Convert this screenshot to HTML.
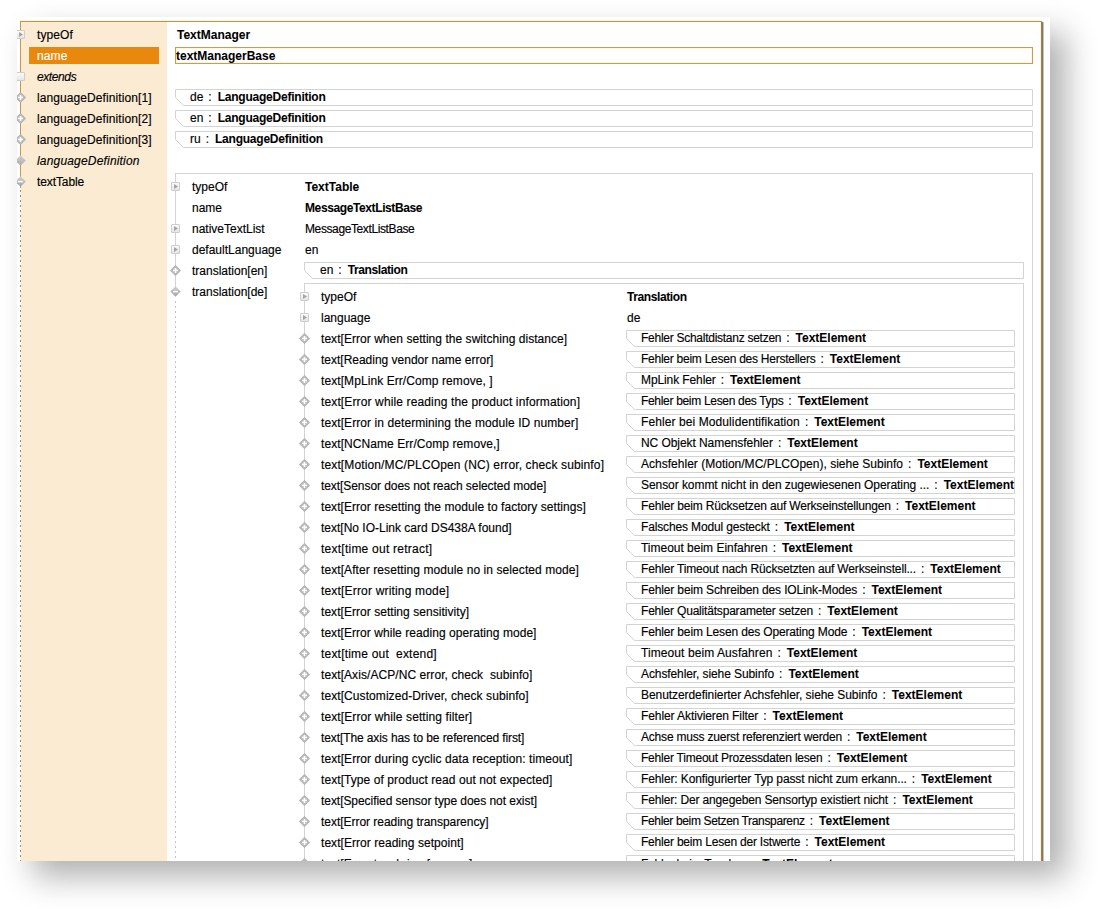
<!DOCTYPE html>
<html><head><meta charset="utf-8"><style>
html,body{margin:0;padding:0;}
body{width:1098px;height:909px;overflow:hidden;background:#fff;position:relative;font-family:"Liberation Sans",sans-serif;font-size:12px;color:#000;}
.shot{position:absolute;left:17px;top:17px;width:1033px;height:844px;background:#fff;box-shadow:16px 16px 30px rgba(0,0,0,0.31);}
.clip{position:absolute;left:0;top:0;width:1098px;height:909px;clip-path:inset(17px 48px 48px 17px);}
.side{position:absolute;left:21px;top:22px;width:146px;height:839px;background:#fcebd3;}
.frame{position:absolute;left:20px;top:21px;width:1021px;height:900px;border-top:1px solid #c4914c;border-right:1px solid #a5804f;}
.frame:before{content:"";position:absolute;left:0;right:0;top:-2px;height:1px;background:#fff7d6;}
.lline{position:absolute;left:20px;top:21px;width:1px;height:167px;background:#c9964c;}
.ldash{position:absolute;left:20px;top:187px;width:1px;height:680px;background:repeating-linear-gradient(to bottom,transparent 0,transparent 3px,#b8864a 3px,#b8864a 5px);}
.rsh{position:absolute;left:1042px;top:22px;width:2px;height:900px;background:linear-gradient(to right,#777 0,#777 50%,#c4c4c4 50%,#c4c4c4 100%);}
.ryl{position:absolute;left:1040px;top:22px;width:1px;height:900px;background:#fff6c8;}
.t{position:absolute;height:17px;line-height:17px;white-space:pre;-webkit-text-stroke:0.15px #000;}
.w{-webkit-text-stroke:0.15px #fff;}
.t b{font-weight:bold;-webkit-text-stroke:0.05px #000;}
.b{font-weight:bold;-webkit-text-stroke:0.05px #000;}
.i{font-style:italic;}
.w{color:#fff;}
.sep{display:inline-block;padding:0 6px 0 5px;}
.sel{position:absolute;width:130px;height:17px;background:#e8890e;}
.inp{position:absolute;left:175px;top:47px;width:856px;height:15px;border:1px solid #cc9a50;background:#fff;box-shadow:inset 0 0 0 1px #fff8dc;}
.tbl{position:absolute;border-top:1px solid #d3d3d3;border-right:1px solid #d3d3d3;}
.vl{position:absolute;width:1px;background:#d3d3d3;}
.vd{position:absolute;width:1px;background:repeating-linear-gradient(to bottom,transparent 0,transparent 3px,#c4c4c4 3px,#c4c4c4 5px);}
.btn{position:absolute;width:7px;height:7px;border:1px solid #cdcdcd;border-radius:1px;background:linear-gradient(#fafafa,#e6e6e6);}
.btn svg{position:absolute;left:-1px;top:-1px;}
.ic{position:absolute;}
</style></head><body>
<div class="shot"></div>
<div class="clip">
<div class="side"></div>
<div class="frame"></div>
<div class="ryl"></div>
<div class="rsh"></div>
<div class="lline"></div>
<div class="ldash"></div>
<div class="t " style="left:37px;top:27px;letter-spacing:0.1px">typeOf</div>
<div class="btn" style="left:16px;top:30px"><svg width="9" height="9"><path d="M3 2 L7 4.5 L3 7 Z" fill="#a4a4a4"/></svg></div>
<div class="sel" style="left:29px;top:47px"></div>
<div class="t w" style="left:37px;top:48px;letter-spacing:0.1px">name</div>
<div class="t i" style="left:37px;top:69px;letter-spacing:-0.4px">extends</div>
<div class="btn" style="left:16px;top:72px"></div>
<div class="t " style="left:37px;top:90px;letter-spacing:0.09px">languageDefinition[1]</div>
<svg class="ic" style="left:15px;top:92px" width="11" height="11"><path d="M5.5 0.3 L10.7 5.5 L5.5 10.7 L0.3 5.5 Z" fill="#b9b9b9" stroke="#adadad" stroke-width="0.8"/><rect x="3" y="4.6" width="5" height="1.6" fill="#fff"/><rect x="4.7" y="3" width="1.6" height="5" fill="#fff"/></svg>
<div class="t " style="left:37px;top:111px;letter-spacing:0.09px">languageDefinition[2]</div>
<svg class="ic" style="left:15px;top:113px" width="11" height="11"><path d="M5.5 0.3 L10.7 5.5 L5.5 10.7 L0.3 5.5 Z" fill="#b9b9b9" stroke="#adadad" stroke-width="0.8"/><rect x="3" y="4.6" width="5" height="1.6" fill="#fff"/><rect x="4.7" y="3" width="1.6" height="5" fill="#fff"/></svg>
<div class="t " style="left:37px;top:132px;letter-spacing:0.09px">languageDefinition[3]</div>
<svg class="ic" style="left:15px;top:134px" width="11" height="11"><path d="M5.5 0.3 L10.7 5.5 L5.5 10.7 L0.3 5.5 Z" fill="#b9b9b9" stroke="#adadad" stroke-width="0.8"/><rect x="3" y="4.6" width="5" height="1.6" fill="#fff"/><rect x="4.7" y="3" width="1.6" height="5" fill="#fff"/></svg>
<div class="t i" style="left:37px;top:153px;letter-spacing:0.18px">languageDefinition</div>
<svg class="ic" style="left:15px;top:155px" width="11" height="11"><defs><linearGradient id="g15155" x1="0" y1="0" x2="0" y2="1"><stop offset="0" stop-color="#d0d0d0"/><stop offset="1" stop-color="#adadad"/></linearGradient></defs><path d="M5.5 0.3 L10.7 5.5 L5.5 10.7 L0.3 5.5 Z" fill="url(#g15155)"/></svg>
<div class="t " style="left:37px;top:174px;letter-spacing:-0.1px">textTable</div>
<svg class="ic" style="left:15px;top:176px" width="11" height="11"><defs><linearGradient id="g15176" x1="0" y1="0" x2="0" y2="1"><stop offset="0" stop-color="#d2d2d2"/><stop offset="1" stop-color="#a2a2a2"/></linearGradient></defs><path d="M5.5 0.3 L10.7 5.5 L5.5 10.7 L0.3 5.5 Z" fill="url(#g15176)"/><rect x="3" y="4.8" width="5" height="1.6" fill="#fff"/></svg>
<div class="t b" style="left:177px;top:27px">TextManager</div>
<div class="inp"></div>
<div class="t b" style="left:176px;top:48px">textManagerBase</div>
<svg class="ic" style="left:175px;top:89px" width="858" height="17"><path d="M0.5 0.5 H857.5 V16.5 H8.5 L0.5 8.5 Z" fill="#fff" stroke="#d3d3d3" stroke-width="1"/></svg>
<div class="t" style="left:190px;top:89px">de<span class="sep">:</span><b style="letter-spacing:-0.23px">LanguageDefinition</b></div>
<svg class="ic" style="left:175px;top:110px" width="858" height="17"><path d="M0.5 0.5 H857.5 V16.5 H8.5 L0.5 8.5 Z" fill="#fff" stroke="#d3d3d3" stroke-width="1"/></svg>
<div class="t" style="left:190px;top:110px">en<span class="sep">:</span><b style="letter-spacing:-0.23px">LanguageDefinition</b></div>
<svg class="ic" style="left:175px;top:131px" width="858" height="17"><path d="M0.5 0.5 H857.5 V16.5 H8.5 L0.5 8.5 Z" fill="#fff" stroke="#d3d3d3" stroke-width="1"/></svg>
<div class="t" style="left:190px;top:131px">ru<span class="sep">:</span><b style="letter-spacing:-0.23px">LanguageDefinition</b></div>
<div class="tbl" style="left:175px;top:173px;width:857px;height:700px"></div>
<div class="vl" style="left:175px;top:173px;height:120px"></div>
<div class="vd" style="left:175px;top:298px;height:570px"></div>
<div class="t " style="left:192px;top:179px">typeOf</div>
<div class="t " style="left:305px;top:179px"><b>TextTable</b></div>
<div class="t " style="left:192px;top:200px">name</div>
<div class="t " style="left:305px;top:200px"><b style="letter-spacing:-0.39px">MessageTextListBase</b></div>
<div class="t " style="left:192px;top:221px">nativeTextList</div>
<div class="t " style="left:305px;top:221px"><span style="letter-spacing:-0.39px">MessageTextListBase</span></div>
<div class="t " style="left:192px;top:242px">defaultLanguage</div>
<div class="t " style="left:305px;top:242px">en</div>
<div class="t " style="left:192px;top:263px">translation[en]</div>
<div class="t " style="left:192px;top:284px">translation[de]</div>
<div class="btn" style="left:171px;top:182px"><svg width="9" height="9"><path d="M3 2 L7 4.5 L3 7 Z" fill="#a4a4a4"/></svg></div>
<div class="btn" style="left:171px;top:224px"><svg width="9" height="9"><path d="M3 2 L7 4.5 L3 7 Z" fill="#a4a4a4"/></svg></div>
<div class="btn" style="left:171px;top:245px"><svg width="9" height="9"><path d="M3 2 L7 4.5 L3 7 Z" fill="#a4a4a4"/></svg></div>
<svg class="ic" style="left:170px;top:265px" width="11" height="11"><path d="M5.5 0.3 L10.7 5.5 L5.5 10.7 L0.3 5.5 Z" fill="#b9b9b9" stroke="#adadad" stroke-width="0.8"/><rect x="3" y="4.6" width="5" height="1.6" fill="#fff"/><rect x="4.7" y="3" width="1.6" height="5" fill="#fff"/></svg>
<svg class="ic" style="left:170px;top:286px" width="11" height="11"><defs><linearGradient id="g170286" x1="0" y1="0" x2="0" y2="1"><stop offset="0" stop-color="#d2d2d2"/><stop offset="1" stop-color="#a2a2a2"/></linearGradient></defs><path d="M5.5 0.3 L10.7 5.5 L5.5 10.7 L0.3 5.5 Z" fill="url(#g170286)"/><rect x="3" y="4.8" width="5" height="1.6" fill="#fff"/></svg>
<svg class="ic" style="left:304px;top:262px" width="720" height="17"><path d="M0.5 0.5 H719.5 V16.5 H8.5 L0.5 8.5 Z" fill="#fff" stroke="#d3d3d3" stroke-width="1"/></svg>
<div class="t" style="left:320px;top:262px">en<span class="sep">:</span><b style="letter-spacing:-0.4px">Translation</b></div>
<div class="tbl" style="left:304px;top:283px;width:719px;height:700px"></div>
<div class="vl" style="left:304px;top:283px;height:600px"></div>
<div class="t " style="left:321px;top:289px">typeOf</div>
<div class="t " style="left:627px;top:289px"><b style="letter-spacing:-0.4px">Translation</b></div>
<div class="t " style="left:321px;top:310px">language</div>
<div class="t " style="left:627px;top:310px">de</div>
<div class="btn" style="left:300px;top:292px"><svg width="9" height="9"><path d="M3 2 L7 4.5 L3 7 Z" fill="#a4a4a4"/></svg></div>
<div class="btn" style="left:300px;top:313px"><svg width="9" height="9"><path d="M3 2 L7 4.5 L3 7 Z" fill="#a4a4a4"/></svg></div>
<div class="t" style="left:321px;top:331px;letter-spacing:0.043px">text[Error when setting the switching distance]</div>
<svg class="ic" style="left:626px;top:330px" width="389" height="17"><path d="M0.5 0.5 H388.5 V16.5 H8.5 L0.5 8.5 Z" fill="#fff" stroke="#d3d3d3" stroke-width="1"/></svg>
<div class="t" style="left:641px;top:330px"><span style="letter-spacing:-0.267px">Fehler Schaltdistanz setzen</span><span class="sep">:</span><b>TextElement</b></div>
<svg class="ic" style="left:299px;top:333px" width="11" height="11"><path d="M5.5 0.3 L10.7 5.5 L5.5 10.7 L0.3 5.5 Z" fill="#b9b9b9" stroke="#adadad" stroke-width="0.8"/><rect x="3" y="4.6" width="5" height="1.6" fill="#fff"/><rect x="4.7" y="3" width="1.6" height="5" fill="#fff"/></svg>
<div class="t" style="left:321px;top:352px;letter-spacing:-0.010px">text[Reading vendor name error]</div>
<svg class="ic" style="left:626px;top:351px" width="389" height="17"><path d="M0.5 0.5 H388.5 V16.5 H8.5 L0.5 8.5 Z" fill="#fff" stroke="#d3d3d3" stroke-width="1"/></svg>
<div class="t" style="left:641px;top:351px"><span style="letter-spacing:-0.252px">Fehler beim Lesen des Herstellers</span><span class="sep">:</span><b>TextElement</b></div>
<svg class="ic" style="left:299px;top:354px" width="11" height="11"><path d="M5.5 0.3 L10.7 5.5 L5.5 10.7 L0.3 5.5 Z" fill="#b9b9b9" stroke="#adadad" stroke-width="0.8"/><rect x="3" y="4.6" width="5" height="1.6" fill="#fff"/><rect x="4.7" y="3" width="1.6" height="5" fill="#fff"/></svg>
<div class="t" style="left:321px;top:373px;letter-spacing:0.079px">text[MpLink Err/Comp remove, ]</div>
<svg class="ic" style="left:626px;top:372px" width="389" height="17"><path d="M0.5 0.5 H388.5 V16.5 H8.5 L0.5 8.5 Z" fill="#fff" stroke="#d3d3d3" stroke-width="1"/></svg>
<div class="t" style="left:641px;top:372px"><span style="letter-spacing:-0.100px">MpLink Fehler</span><span class="sep">:</span><b>TextElement</b></div>
<svg class="ic" style="left:299px;top:375px" width="11" height="11"><path d="M5.5 0.3 L10.7 5.5 L5.5 10.7 L0.3 5.5 Z" fill="#b9b9b9" stroke="#adadad" stroke-width="0.8"/><rect x="3" y="4.6" width="5" height="1.6" fill="#fff"/><rect x="4.7" y="3" width="1.6" height="5" fill="#fff"/></svg>
<div class="t" style="left:321px;top:394px;letter-spacing:0.129px">text[Error while reading the product information]</div>
<svg class="ic" style="left:626px;top:393px" width="389" height="17"><path d="M0.5 0.5 H388.5 V16.5 H8.5 L0.5 8.5 Z" fill="#fff" stroke="#d3d3d3" stroke-width="1"/></svg>
<div class="t" style="left:641px;top:393px"><span style="letter-spacing:-0.315px">Fehler beim Lesen des Typs</span><span class="sep">:</span><b>TextElement</b></div>
<svg class="ic" style="left:299px;top:396px" width="11" height="11"><path d="M5.5 0.3 L10.7 5.5 L5.5 10.7 L0.3 5.5 Z" fill="#b9b9b9" stroke="#adadad" stroke-width="0.8"/><rect x="3" y="4.6" width="5" height="1.6" fill="#fff"/><rect x="4.7" y="3" width="1.6" height="5" fill="#fff"/></svg>
<div class="t" style="left:321px;top:415px;letter-spacing:0.083px">text[Error in determining the module ID number]</div>
<svg class="ic" style="left:626px;top:414px" width="389" height="17"><path d="M0.5 0.5 H388.5 V16.5 H8.5 L0.5 8.5 Z" fill="#fff" stroke="#d3d3d3" stroke-width="1"/></svg>
<div class="t" style="left:641px;top:414px"><span style="letter-spacing:0.093px">Fehler bei Modulidentifikation</span><span class="sep">:</span><b>TextElement</b></div>
<svg class="ic" style="left:299px;top:417px" width="11" height="11"><path d="M5.5 0.3 L10.7 5.5 L5.5 10.7 L0.3 5.5 Z" fill="#b9b9b9" stroke="#adadad" stroke-width="0.8"/><rect x="3" y="4.6" width="5" height="1.6" fill="#fff"/><rect x="4.7" y="3" width="1.6" height="5" fill="#fff"/></svg>
<div class="t" style="left:321px;top:436px;letter-spacing:0.071px">text[NCName Err/Comp remove,]</div>
<svg class="ic" style="left:626px;top:435px" width="389" height="17"><path d="M0.5 0.5 H388.5 V16.5 H8.5 L0.5 8.5 Z" fill="#fff" stroke="#d3d3d3" stroke-width="1"/></svg>
<div class="t" style="left:641px;top:435px"><span style="letter-spacing:-0.068px">NC Objekt Namensfehler</span><span class="sep">:</span><b>TextElement</b></div>
<svg class="ic" style="left:299px;top:438px" width="11" height="11"><path d="M5.5 0.3 L10.7 5.5 L5.5 10.7 L0.3 5.5 Z" fill="#b9b9b9" stroke="#adadad" stroke-width="0.8"/><rect x="3" y="4.6" width="5" height="1.6" fill="#fff"/><rect x="4.7" y="3" width="1.6" height="5" fill="#fff"/></svg>
<div class="t" style="left:321px;top:457px;letter-spacing:0.129px">text[Motion/MC/PLCOpen (NC) error, check subinfo]</div>
<svg class="ic" style="left:626px;top:456px" width="389" height="17"><path d="M0.5 0.5 H388.5 V16.5 H8.5 L0.5 8.5 Z" fill="#fff" stroke="#d3d3d3" stroke-width="1"/></svg>
<div class="t" style="left:641px;top:456px"><span style="letter-spacing:0.013px">Achsfehler (Motion/MC/PLCOpen), siehe Subinfo</span><span class="sep">:</span><b>TextElement</b></div>
<svg class="ic" style="left:299px;top:459px" width="11" height="11"><path d="M5.5 0.3 L10.7 5.5 L5.5 10.7 L0.3 5.5 Z" fill="#b9b9b9" stroke="#adadad" stroke-width="0.8"/><rect x="3" y="4.6" width="5" height="1.6" fill="#fff"/><rect x="4.7" y="3" width="1.6" height="5" fill="#fff"/></svg>
<div class="t" style="left:321px;top:478px;letter-spacing:-0.070px">text[Sensor does not reach selected mode]</div>
<svg class="ic" style="left:626px;top:477px" width="389" height="17"><path d="M0.5 0.5 H388.5 V16.5 H8.5 L0.5 8.5 Z" fill="#fff" stroke="#d3d3d3" stroke-width="1"/></svg>
<div class="t" style="left:641px;top:477px"><span style="letter-spacing:-0.062px">Sensor kommt nicht in den zugewiesenen Operating ...</span><span class="sep">:</span><b>TextElement</b></div>
<svg class="ic" style="left:299px;top:480px" width="11" height="11"><path d="M5.5 0.3 L10.7 5.5 L5.5 10.7 L0.3 5.5 Z" fill="#b9b9b9" stroke="#adadad" stroke-width="0.8"/><rect x="3" y="4.6" width="5" height="1.6" fill="#fff"/><rect x="4.7" y="3" width="1.6" height="5" fill="#fff"/></svg>
<div class="t" style="left:321px;top:499px;letter-spacing:0.055px">text[Error resetting the module to factory settings]</div>
<svg class="ic" style="left:626px;top:498px" width="389" height="17"><path d="M0.5 0.5 H388.5 V16.5 H8.5 L0.5 8.5 Z" fill="#fff" stroke="#d3d3d3" stroke-width="1"/></svg>
<div class="t" style="left:641px;top:498px"><span style="letter-spacing:-0.167px">Fehler beim Rücksetzen auf Werkseinstellungen</span><span class="sep">:</span><b>TextElement</b></div>
<svg class="ic" style="left:299px;top:501px" width="11" height="11"><path d="M5.5 0.3 L10.7 5.5 L5.5 10.7 L0.3 5.5 Z" fill="#b9b9b9" stroke="#adadad" stroke-width="0.8"/><rect x="3" y="4.6" width="5" height="1.6" fill="#fff"/><rect x="4.7" y="3" width="1.6" height="5" fill="#fff"/></svg>
<div class="t" style="left:321px;top:520px;letter-spacing:-0.003px">text[No IO-Link card DS438A found]</div>
<svg class="ic" style="left:626px;top:519px" width="389" height="17"><path d="M0.5 0.5 H388.5 V16.5 H8.5 L0.5 8.5 Z" fill="#fff" stroke="#d3d3d3" stroke-width="1"/></svg>
<div class="t" style="left:641px;top:519px"><span style="letter-spacing:-0.143px">Falsches Modul gesteckt</span><span class="sep">:</span><b>TextElement</b></div>
<svg class="ic" style="left:299px;top:522px" width="11" height="11"><path d="M5.5 0.3 L10.7 5.5 L5.5 10.7 L0.3 5.5 Z" fill="#b9b9b9" stroke="#adadad" stroke-width="0.8"/><rect x="3" y="4.6" width="5" height="1.6" fill="#fff"/><rect x="4.7" y="3" width="1.6" height="5" fill="#fff"/></svg>
<div class="t" style="left:321px;top:541px;letter-spacing:0.243px">text[time out retract]</div>
<svg class="ic" style="left:626px;top:540px" width="389" height="17"><path d="M0.5 0.5 H388.5 V16.5 H8.5 L0.5 8.5 Z" fill="#fff" stroke="#d3d3d3" stroke-width="1"/></svg>
<div class="t" style="left:641px;top:540px"><span style="letter-spacing:-0.014px">Timeout beim Einfahren</span><span class="sep">:</span><b>TextElement</b></div>
<svg class="ic" style="left:299px;top:543px" width="11" height="11"><path d="M5.5 0.3 L10.7 5.5 L5.5 10.7 L0.3 5.5 Z" fill="#b9b9b9" stroke="#adadad" stroke-width="0.8"/><rect x="3" y="4.6" width="5" height="1.6" fill="#fff"/><rect x="4.7" y="3" width="1.6" height="5" fill="#fff"/></svg>
<div class="t" style="left:321px;top:562px;letter-spacing:0.081px">text[After resetting module no in selected mode]</div>
<svg class="ic" style="left:626px;top:561px" width="389" height="17"><path d="M0.5 0.5 H388.5 V16.5 H8.5 L0.5 8.5 Z" fill="#fff" stroke="#d3d3d3" stroke-width="1"/></svg>
<div class="t" style="left:641px;top:561px"><span style="letter-spacing:-0.160px">Fehler Timeout nach Rücksetzten auf Werkseinstell...</span><span class="sep">:</span><b>TextElement</b></div>
<svg class="ic" style="left:299px;top:564px" width="11" height="11"><path d="M5.5 0.3 L10.7 5.5 L5.5 10.7 L0.3 5.5 Z" fill="#b9b9b9" stroke="#adadad" stroke-width="0.8"/><rect x="3" y="4.6" width="5" height="1.6" fill="#fff"/><rect x="4.7" y="3" width="1.6" height="5" fill="#fff"/></svg>
<div class="t" style="left:321px;top:583px;letter-spacing:0.178px">text[Error writing mode]</div>
<svg class="ic" style="left:626px;top:582px" width="389" height="17"><path d="M0.5 0.5 H388.5 V16.5 H8.5 L0.5 8.5 Z" fill="#fff" stroke="#d3d3d3" stroke-width="1"/></svg>
<div class="t" style="left:641px;top:582px"><span style="letter-spacing:-0.139px">Fehler beim Schreiben des IOLink-Modes</span><span class="sep">:</span><b>TextElement</b></div>
<svg class="ic" style="left:299px;top:585px" width="11" height="11"><path d="M5.5 0.3 L10.7 5.5 L5.5 10.7 L0.3 5.5 Z" fill="#b9b9b9" stroke="#adadad" stroke-width="0.8"/><rect x="3" y="4.6" width="5" height="1.6" fill="#fff"/><rect x="4.7" y="3" width="1.6" height="5" fill="#fff"/></svg>
<div class="t" style="left:321px;top:604px;letter-spacing:0.043px">text[Error setting sensitivity]</div>
<svg class="ic" style="left:626px;top:603px" width="389" height="17"><path d="M0.5 0.5 H388.5 V16.5 H8.5 L0.5 8.5 Z" fill="#fff" stroke="#d3d3d3" stroke-width="1"/></svg>
<div class="t" style="left:641px;top:603px"><span style="letter-spacing:-0.191px">Fehler Qualitätsparameter setzen</span><span class="sep">:</span><b>TextElement</b></div>
<svg class="ic" style="left:299px;top:606px" width="11" height="11"><path d="M5.5 0.3 L10.7 5.5 L5.5 10.7 L0.3 5.5 Z" fill="#b9b9b9" stroke="#adadad" stroke-width="0.8"/><rect x="3" y="4.6" width="5" height="1.6" fill="#fff"/><rect x="4.7" y="3" width="1.6" height="5" fill="#fff"/></svg>
<div class="t" style="left:321px;top:625px;letter-spacing:0.051px">text[Error while reading operating mode]</div>
<svg class="ic" style="left:626px;top:624px" width="389" height="17"><path d="M0.5 0.5 H388.5 V16.5 H8.5 L0.5 8.5 Z" fill="#fff" stroke="#d3d3d3" stroke-width="1"/></svg>
<div class="t" style="left:641px;top:624px"><span style="letter-spacing:-0.144px">Fehler beim Lesen des Operating Mode</span><span class="sep">:</span><b>TextElement</b></div>
<svg class="ic" style="left:299px;top:627px" width="11" height="11"><path d="M5.5 0.3 L10.7 5.5 L5.5 10.7 L0.3 5.5 Z" fill="#b9b9b9" stroke="#adadad" stroke-width="0.8"/><rect x="3" y="4.6" width="5" height="1.6" fill="#fff"/><rect x="4.7" y="3" width="1.6" height="5" fill="#fff"/></svg>
<div class="t" style="left:321px;top:646px;letter-spacing:0.200px">text[time out &nbsp;extend]</div>
<svg class="ic" style="left:626px;top:645px" width="389" height="17"><path d="M0.5 0.5 H388.5 V16.5 H8.5 L0.5 8.5 Z" fill="#fff" stroke="#d3d3d3" stroke-width="1"/></svg>
<div class="t" style="left:641px;top:645px"><span style="letter-spacing:0.082px">Timeout beim Ausfahren</span><span class="sep">:</span><b>TextElement</b></div>
<svg class="ic" style="left:299px;top:648px" width="11" height="11"><path d="M5.5 0.3 L10.7 5.5 L5.5 10.7 L0.3 5.5 Z" fill="#b9b9b9" stroke="#adadad" stroke-width="0.8"/><rect x="3" y="4.6" width="5" height="1.6" fill="#fff"/><rect x="4.7" y="3" width="1.6" height="5" fill="#fff"/></svg>
<div class="t" style="left:321px;top:667px;letter-spacing:0.071px">text[Axis/ACP/NC error, check &nbsp;subinfo]</div>
<svg class="ic" style="left:626px;top:666px" width="389" height="17"><path d="M0.5 0.5 H388.5 V16.5 H8.5 L0.5 8.5 Z" fill="#fff" stroke="#d3d3d3" stroke-width="1"/></svg>
<div class="t" style="left:641px;top:666px"><span style="letter-spacing:-0.096px">Achsfehler, siehe Subinfo</span><span class="sep">:</span><b>TextElement</b></div>
<svg class="ic" style="left:299px;top:669px" width="11" height="11"><path d="M5.5 0.3 L10.7 5.5 L5.5 10.7 L0.3 5.5 Z" fill="#b9b9b9" stroke="#adadad" stroke-width="0.8"/><rect x="3" y="4.6" width="5" height="1.6" fill="#fff"/><rect x="4.7" y="3" width="1.6" height="5" fill="#fff"/></svg>
<div class="t" style="left:321px;top:688px;letter-spacing:0.078px">text[Customized-Driver, check subinfo]</div>
<svg class="ic" style="left:626px;top:687px" width="389" height="17"><path d="M0.5 0.5 H388.5 V16.5 H8.5 L0.5 8.5 Z" fill="#fff" stroke="#d3d3d3" stroke-width="1"/></svg>
<div class="t" style="left:641px;top:687px"><span style="letter-spacing:-0.067px">Benutzerdefinierter Achsfehler, siehe Subinfo</span><span class="sep">:</span><b>TextElement</b></div>
<svg class="ic" style="left:299px;top:690px" width="11" height="11"><path d="M5.5 0.3 L10.7 5.5 L5.5 10.7 L0.3 5.5 Z" fill="#b9b9b9" stroke="#adadad" stroke-width="0.8"/><rect x="3" y="4.6" width="5" height="1.6" fill="#fff"/><rect x="4.7" y="3" width="1.6" height="5" fill="#fff"/></svg>
<div class="t" style="left:321px;top:709px;letter-spacing:0.100px">text[Error while setting filter]</div>
<svg class="ic" style="left:626px;top:708px" width="389" height="17"><path d="M0.5 0.5 H388.5 V16.5 H8.5 L0.5 8.5 Z" fill="#fff" stroke="#d3d3d3" stroke-width="1"/></svg>
<div class="t" style="left:641px;top:708px"><span style="letter-spacing:-0.088px">Fehler Aktivieren Filter</span><span class="sep">:</span><b>TextElement</b></div>
<svg class="ic" style="left:299px;top:711px" width="11" height="11"><path d="M5.5 0.3 L10.7 5.5 L5.5 10.7 L0.3 5.5 Z" fill="#b9b9b9" stroke="#adadad" stroke-width="0.8"/><rect x="3" y="4.6" width="5" height="1.6" fill="#fff"/><rect x="4.7" y="3" width="1.6" height="5" fill="#fff"/></svg>
<div class="t" style="left:321px;top:730px;letter-spacing:-0.100px">text[The axis has to be referenced first]</div>
<svg class="ic" style="left:626px;top:729px" width="389" height="17"><path d="M0.5 0.5 H388.5 V16.5 H8.5 L0.5 8.5 Z" fill="#fff" stroke="#d3d3d3" stroke-width="1"/></svg>
<div class="t" style="left:641px;top:729px"><span style="letter-spacing:-0.195px">Achse muss zuerst referenziert werden</span><span class="sep">:</span><b>TextElement</b></div>
<svg class="ic" style="left:299px;top:732px" width="11" height="11"><path d="M5.5 0.3 L10.7 5.5 L5.5 10.7 L0.3 5.5 Z" fill="#b9b9b9" stroke="#adadad" stroke-width="0.8"/><rect x="3" y="4.6" width="5" height="1.6" fill="#fff"/><rect x="4.7" y="3" width="1.6" height="5" fill="#fff"/></svg>
<div class="t" style="left:321px;top:751px;letter-spacing:0.081px">text[Error during cyclic data reception: timeout]</div>
<svg class="ic" style="left:626px;top:750px" width="389" height="17"><path d="M0.5 0.5 H388.5 V16.5 H8.5 L0.5 8.5 Z" fill="#fff" stroke="#d3d3d3" stroke-width="1"/></svg>
<div class="t" style="left:641px;top:750px"><span style="letter-spacing:-0.221px">Fehler Timeout Prozessdaten lesen</span><span class="sep">:</span><b>TextElement</b></div>
<svg class="ic" style="left:299px;top:753px" width="11" height="11"><path d="M5.5 0.3 L10.7 5.5 L5.5 10.7 L0.3 5.5 Z" fill="#b9b9b9" stroke="#adadad" stroke-width="0.8"/><rect x="3" y="4.6" width="5" height="1.6" fill="#fff"/><rect x="4.7" y="3" width="1.6" height="5" fill="#fff"/></svg>
<div class="t" style="left:321px;top:772px;letter-spacing:0.074px">text[Type of product read out not expected]</div>
<svg class="ic" style="left:626px;top:771px" width="389" height="17"><path d="M0.5 0.5 H388.5 V16.5 H8.5 L0.5 8.5 Z" fill="#fff" stroke="#d3d3d3" stroke-width="1"/></svg>
<div class="t" style="left:641px;top:771px"><span style="letter-spacing:-0.117px">Fehler: Konfigurierter Typ passt nicht zum erkann...</span><span class="sep">:</span><b>TextElement</b></div>
<svg class="ic" style="left:299px;top:774px" width="11" height="11"><path d="M5.5 0.3 L10.7 5.5 L5.5 10.7 L0.3 5.5 Z" fill="#b9b9b9" stroke="#adadad" stroke-width="0.8"/><rect x="3" y="4.6" width="5" height="1.6" fill="#fff"/><rect x="4.7" y="3" width="1.6" height="5" fill="#fff"/></svg>
<div class="t" style="left:321px;top:793px;letter-spacing:-0.051px">text[Specified sensor type does not exist]</div>
<svg class="ic" style="left:626px;top:792px" width="389" height="17"><path d="M0.5 0.5 H388.5 V16.5 H8.5 L0.5 8.5 Z" fill="#fff" stroke="#d3d3d3" stroke-width="1"/></svg>
<div class="t" style="left:641px;top:792px"><span style="letter-spacing:-0.151px">Fehler: Der angegeben Sensortyp existiert nicht</span><span class="sep">:</span><b>TextElement</b></div>
<svg class="ic" style="left:299px;top:795px" width="11" height="11"><path d="M5.5 0.3 L10.7 5.5 L5.5 10.7 L0.3 5.5 Z" fill="#b9b9b9" stroke="#adadad" stroke-width="0.8"/><rect x="3" y="4.6" width="5" height="1.6" fill="#fff"/><rect x="4.7" y="3" width="1.6" height="5" fill="#fff"/></svg>
<div class="t" style="left:321px;top:814px;letter-spacing:-0.035px">text[Error reading transparency]</div>
<svg class="ic" style="left:626px;top:813px" width="389" height="17"><path d="M0.5 0.5 H388.5 V16.5 H8.5 L0.5 8.5 Z" fill="#fff" stroke="#d3d3d3" stroke-width="1"/></svg>
<div class="t" style="left:641px;top:813px"><span style="letter-spacing:-0.347px">Fehler beim Setzen Transparenz</span><span class="sep">:</span><b>TextElement</b></div>
<svg class="ic" style="left:299px;top:816px" width="11" height="11"><path d="M5.5 0.3 L10.7 5.5 L5.5 10.7 L0.3 5.5 Z" fill="#b9b9b9" stroke="#adadad" stroke-width="0.8"/><rect x="3" y="4.6" width="5" height="1.6" fill="#fff"/><rect x="4.7" y="3" width="1.6" height="5" fill="#fff"/></svg>
<div class="t" style="left:321px;top:835px;letter-spacing:0.044px">text[Error reading setpoint]</div>
<svg class="ic" style="left:626px;top:834px" width="389" height="17"><path d="M0.5 0.5 H388.5 V16.5 H8.5 L0.5 8.5 Z" fill="#fff" stroke="#d3d3d3" stroke-width="1"/></svg>
<div class="t" style="left:641px;top:834px"><span style="letter-spacing:-0.207px">Fehler beim Lesen der Istwerte</span><span class="sep">:</span><b>TextElement</b></div>
<svg class="ic" style="left:299px;top:837px" width="11" height="11"><path d="M5.5 0.3 L10.7 5.5 L5.5 10.7 L0.3 5.5 Z" fill="#b9b9b9" stroke="#adadad" stroke-width="0.8"/><rect x="3" y="4.6" width="5" height="1.6" fill="#fff"/><rect x="4.7" y="3" width="1.6" height="5" fill="#fff"/></svg>
<div class="t" style="left:321px;top:856px;letter-spacing:0.000px">text[Error teach-in of sensor]</div>
<svg class="ic" style="left:626px;top:855px" width="389" height="17"><path d="M0.5 0.5 H388.5 V16.5 H8.5 L0.5 8.5 Z" fill="#fff" stroke="#d3d3d3" stroke-width="1"/></svg>
<div class="t" style="left:641px;top:856px"><span style="letter-spacing:-0.263px">Fehler beim Teachen</span><span class="sep">:</span><b>TextElement</b></div>
<svg class="ic" style="left:299px;top:858px" width="11" height="11"><path d="M5.5 0.3 L10.7 5.5 L5.5 10.7 L0.3 5.5 Z" fill="#b9b9b9" stroke="#adadad" stroke-width="0.8"/><rect x="3" y="4.6" width="5" height="1.6" fill="#fff"/><rect x="4.7" y="3" width="1.6" height="5" fill="#fff"/></svg>
</div>
</body></html>
